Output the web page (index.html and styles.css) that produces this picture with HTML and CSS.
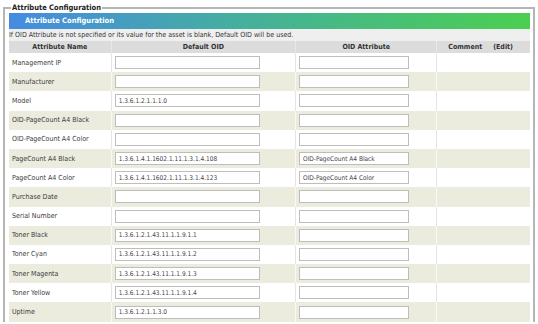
FILE: index.html
```html
<!DOCTYPE html>
<html lang="en">
<head>
    <meta charset="UTF-8">
    <title>Attribute Configuration</title>
    <link rel="stylesheet" href="styles.css">
</head>
<body>

    <fieldset class="config-box">
        <legend>Attribute Configuration</legend>

        <div class="title-bar">Attribute Configuration</div>
        <div class="notice">If OID Attribute is not specified or its value for the asset is blank, Default OID will be used.</div>

        <table class="attr-table">
            <colgroup>
                <col class="c-name">
                <col class="c-oid">
                <col class="c-attr">
                <col class="c-comment">
            </colgroup>
            <thead>
                <tr>
                    <th>Attribute Name</th>
                    <th>Default OID</th>
                    <th>OID Attribute</th>
                    <th class="comment-head"><span>Comment</span><span>(Edit)</span></th>
                </tr>
            </thead>
            <tbody>
                <tr>
                    <td>Management IP</td>
                    <td><input type="text" class="oid-input" value=""></td>
                    <td><input type="text" class="attr-input" value=""></td>
                    <td></td>
                </tr>
                <tr>
                    <td>Manufacturer</td>
                    <td><input type="text" class="oid-input" value=""></td>
                    <td><input type="text" class="attr-input" value=""></td>
                    <td></td>
                </tr>
                <tr>
                    <td>Model</td>
                    <td><input type="text" class="oid-input" value="1.3.6.1.2.1.1.1.0"></td>
                    <td><input type="text" class="attr-input" value=""></td>
                    <td></td>
                </tr>
                <tr>
                    <td>OID-PageCount A4 Black</td>
                    <td><input type="text" class="oid-input" value=""></td>
                    <td><input type="text" class="attr-input" value=""></td>
                    <td></td>
                </tr>
                <tr>
                    <td>OID-PageCount A4 Color</td>
                    <td><input type="text" class="oid-input" value=""></td>
                    <td><input type="text" class="attr-input" value=""></td>
                    <td></td>
                </tr>
                <tr>
                    <td>PageCount A4 Black</td>
                    <td><input type="text" class="oid-input" value="1.3.6.1.4.1.1602.1.11.1.3.1.4.108"></td>
                    <td><input type="text" class="attr-input" value="OID-PageCount A4 Black"></td>
                    <td></td>
                </tr>
                <tr>
                    <td>PageCount A4 Color</td>
                    <td><input type="text" class="oid-input" value="1.3.6.1.4.1.1602.1.11.1.3.1.4.123"></td>
                    <td><input type="text" class="attr-input" value="OID-PageCount A4 Color"></td>
                    <td></td>
                </tr>
                <tr>
                    <td>Purchase Date</td>
                    <td><input type="text" class="oid-input" value=""></td>
                    <td><input type="text" class="attr-input" value=""></td>
                    <td></td>
                </tr>
                <tr>
                    <td>Serial Number</td>
                    <td><input type="text" class="oid-input" value=""></td>
                    <td><input type="text" class="attr-input" value=""></td>
                    <td></td>
                </tr>
                <tr>
                    <td>Toner Black</td>
                    <td><input type="text" class="oid-input" value="1.3.6.1.2.1.43.11.1.1.9.1.1"></td>
                    <td><input type="text" class="attr-input" value=""></td>
                    <td></td>
                </tr>
                <tr>
                    <td>Toner Cyan</td>
                    <td><input type="text" class="oid-input" value="1.3.6.1.2.1.43.11.1.1.9.1.2"></td>
                    <td><input type="text" class="attr-input" value=""></td>
                    <td></td>
                </tr>
                <tr>
                    <td>Toner Magenta</td>
                    <td><input type="text" class="oid-input" value="1.3.6.1.2.1.43.11.1.1.9.1.3"></td>
                    <td><input type="text" class="attr-input" value=""></td>
                    <td></td>
                </tr>
                <tr>
                    <td>Toner Yellow</td>
                    <td><input type="text" class="oid-input" value="1.3.6.1.2.1.43.11.1.1.9.1.4"></td>
                    <td><input type="text" class="attr-input" value=""></td>
                    <td></td>
                </tr>
                <tr>
                    <td>Uptime</td>
                    <td><input type="text" class="oid-input" value="1.3.6.1.2.1.1.3.0"></td>
                    <td><input type="text" class="attr-input" value=""></td>
                    <td></td>
                </tr>
            </tbody>
        </table>
    </fieldset>

</body>
</html>
```

FILE: styles.css
```css
body {
    font-family: "DejaVu Sans Condensed", "DejaVu Sans", Tahoma, sans-serif;
    font-size: 7px;
    color: #333;
    margin: 0;
    padding: 3px 0 0 0;
    background-color: #fff;
}
.config-box {
    margin: 0 3px 0 3px;
    padding: 0 3px 0 4px;
    border: 2px solid #b5b5b5;
    border-bottom: none;
}
.config-box legend {
    font-weight: bold;
    font-size: 7.5px;
    color: #222;
    padding: 0 1px;
    margin-left: 2px;
    line-height: 10px;
}
.title-bar {
    height: 16px;
    line-height: 16px;
    padding-left: 16px;
    margin-top: 0;
    color: #fff;
    font-weight: bold;
    font-size: 7.5px;
    background: linear-gradient(to right, #458be2 0%, #45b09c 45%, #4ccf50 100%);
}
.notice {
    height: 12px;
    line-height: 12px;
    background-color: #efefef;
    color: #333;
}
.attr-table {
    width: 100%;
    border-collapse: collapse;
    table-layout: fixed;
}
.c-name { width: 102px; }
.c-oid { width: 184px; }
.c-attr { width: 141px; }
.c-comment { width: 93px; }
.attr-table th {
    height: 12px;
    padding: 0;
    background-color: #dcdcdc;
    font-weight: bold;
    color: #333;
    text-align: center;
    border-left: 1px solid #e8e8e8;
}
.attr-table th:first-child {
    border-left: none;
}
.comment-head {
    text-align: right;
}
.comment-head span + span {
    margin-left: 11px;
    margin-right: 6px;
}
.attr-table td {
    height: 19.2px;
    padding: 0 0 0 3px;
    border-left: 1px solid #e4e4e4;
    vertical-align: middle;
    color: #3c3c3c;
}
.attr-table td:first-child {
    border-left: none;
}
.attr-table tbody tr:nth-child(even) td {
    background-color: #ebebde;
    border-left-color: #fafaf5;
}
.oid-input,
.attr-input {
    box-sizing: border-box;
    height: 13px;
    padding: 0 3px;
    margin: 0;
    border: 1px solid #bdbdbd;
    background-color: #fff;
    font-family: "DejaVu Sans Condensed", "DejaVu Sans", Tahoma, sans-serif;
    font-size: 6.5px;
    color: #444;
    display: block;
}
.oid-input {
    width: 145px;
}
.attr-input {
    width: 110px;
}
```
